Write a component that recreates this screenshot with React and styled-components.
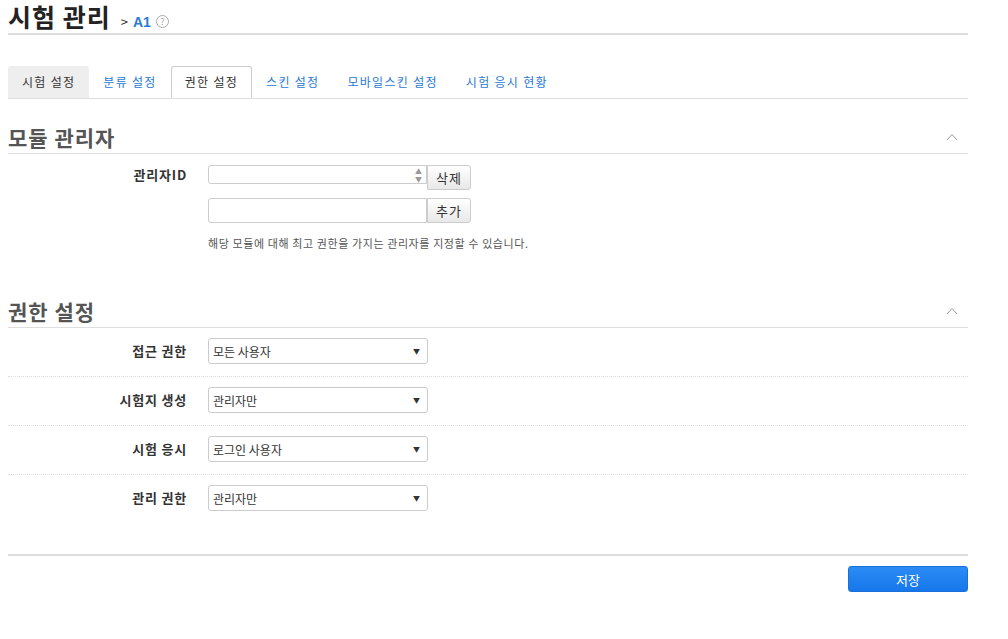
import styled, { createGlobalStyle } from "styled-components";

const Global = createGlobalStyle`
  body {
    margin: 0;
    background: #fff;
    font-family: "Noto Sans CJK KR", "Liberation Sans", sans-serif;
    color: #333;
  }
`;

const Page = styled.div`
  width: 960px;
  padding: 0 8px;
`;

const TitleBar = styled.div`
  display: flex;
  align-items: baseline;
  gap: 10px;
  height: 33px;
  border-bottom: 2px solid #ddd;
`;

const Title = styled.h1`
  margin: 0;
  font-size: 25px;
  font-weight: bold;
  color: #222;
  line-height: 32px;
  letter-spacing: 1px;
`;

const Crumb = styled.span`
  font-size: 13px;
  color: #333;
  display: flex;
  align-items: center;
  gap: 5px;
  b {
    color: #2a7ad5;
    font-family: "Liberation Sans", sans-serif;
    font-size: 14px;
  }
`;

const Help = styled.span`
  display: inline-flex;
  align-items: center;
  justify-content: center;
  width: 11px;
  height: 11px;
  border: 1px solid #aaa;
  border-radius: 50%;
  font-size: 9px;
  color: #aaa;
`;

const Tabs = styled.div`
  display: flex;
  margin-top: 31px;
  border-bottom: 1px solid #ddd;
  height: 32px;
`;

const Tab = styled.div`
  padding: 0 13px;
  font-size: 12px;
  letter-spacing: 1.3px;
  color: ${(p) => (p.$active || p.$first ? "#333" : "#2a7ad5")};
  background: ${(p) => (p.$first ? "#eee" : "#fff")};
  border: 1px solid ${(p) => (p.$active ? "#ccc" : "transparent")};
  border-bottom: ${(p) => (p.$active ? "1px solid #fff" : "none")};
  border-radius: 3px 3px 0 0;
  margin-bottom: -1px;
  height: 32px;
  box-sizing: border-box;
  line-height: 30px;
`;

const SectionHead = styled.div`
  display: flex;
  justify-content: space-between;
  align-items: center;
  margin-top: ${(p) => p.$top}px;
  height: 32px;
  border-bottom: 1px solid #ddd;
  h2 {
    margin: 0;
    font-size: 21px;
    font-weight: bold;
    color: #555;
    letter-spacing: 1px;
  }
`;

const Chevron = styled.svg`
  margin-right: 10px;
`;

const Row = styled.div`
  display: grid;
  grid-template-columns: 179px 1fr;
  column-gap: 21px;
  padding: ${(p) => p.$pad || "10px 0"};
  border-bottom: ${(p) => (p.$dotted ? "1px dotted #ddd" : "none")};
`;

const Label = styled.div`
  text-align: right;
  font-size: 13px;
  font-weight: bold;
  letter-spacing: 0.8px;
  color: #333;
  line-height: 26px;
`;

const Stack = styled.div`
  display: flex;
  flex-direction: column;
  gap: 8px;
`;

const InputGroup = styled.div`
  display: flex;
  align-items: flex-start;
`;

const Input = styled.div`
  width: 219px;
  height: ${(p) => p.$h}px;
  border: 1px solid #ccc;
  border-radius: 3px 0 0 3px;
  display: flex;
  flex-direction: column;
  justify-content: center;
  align-items: flex-end;
  font-size: 7px;
  line-height: 8px;
  color: #999;
  padding-right: 4px;
  box-sizing: border-box;
`;

const Button = styled.button`
  height: 25px;
  padding: 0 8px;
  border: 1px solid #ccc;
  border-radius: 0 3px 3px 0;
  background: linear-gradient(#fff, #e8e8e8);
  font-family: inherit;
  font-size: 13px;
  letter-spacing: 1px;
  color: #333;
`;

const Hint = styled.div`
  font-size: 11px;
  letter-spacing: 0.6px;
  color: #555;
  margin-top: 4px;
`;

const Select = styled.div`
  width: 220px;
  height: 26px;
  border: 1px solid #ccc;
  border-radius: 3px;
  box-sizing: border-box;
  display: flex;
  justify-content: space-between;
  align-items: center;
  padding: 0 7px 0 4px;
  font-size: 12px;
  color: #333;
  span {
    font-size: 7px;
    color: #333;
  }
`;

const Footer = styled.div`
  margin-top: 31px;
  border-top: 2px solid #ddd;
  padding-top: 10px;
  display: flex;
  justify-content: flex-end;
`;

const Save = styled.button`
  width: 120px;
  height: 26px;
  border: 1px solid #1a6fd8;
  border-radius: 3px;
  background: linear-gradient(#2b8cf5, #1577ea);
  color: #fff;
  font-family: inherit;
  font-size: 13px;
`;

const tabs = ["시험 설정", "분류 설정", "권한 설정", "스킨 설정", "모바일스킨 설정", "시험 응시 현황"];
const perms = [
  ["접근 권한", "모든 사용자"],
  ["시험지 생성", "관리자만"],
  ["시험 응시", "로그인 사용자"],
  ["관리 권한", "관리자만"],
];

const Up = () => (
  <Chevron width="12" height="8" viewBox="0 0 12 8">
    <path d="M1 7 L6 1.5 L11 7" fill="none" stroke="#999" strokeWidth="1" />
  </Chevron>
);

export default function App() {
  return (
    <Page>
      <Global />
      <TitleBar>
        <Title>시험 관리</Title>
        <Crumb>
          &gt; <b>A1</b> <Help>?</Help>
        </Crumb>
      </TitleBar>
      <Tabs>
        {tabs.map((t, i) => (
          <Tab key={t} $first={i === 0} $active={i === 2}>
            {t}
          </Tab>
        ))}
      </Tabs>
      <SectionHead $top={22}>
        <h2>모듈 관리자</h2>
        <Up />
      </SectionHead>
      <Row $pad="11px 0 0">
        <Label style={{ lineHeight: "20px" }}>관리자ID</Label>
        <Stack>
          <InputGroup>
            <Input $h={19}>
              <div>▲</div>
              <div>▼</div>
            </Input>
            <Button>삭제</Button>
          </InputGroup>
          <InputGroup>
            <Input $h={25} />
            <Button>추가</Button>
          </InputGroup>
          <Hint>해당 모듈에 대해 최고 권한을 가지는 관리자를 지정할 수 있습니다.</Hint>
        </Stack>
      </Row>
      <SectionHead $top={44}>
        <h2>권한 설정</h2>
        <Up />
      </SectionHead>
      {perms.map(([l, v], i) => (
        <Row key={l} $dotted={i < 3} $pad="10px 0 12px">
          <Label>{l}</Label>
          <Select>
            {v}
            <span>▼</span>
          </Select>
        </Row>
      ))}
      <Footer>
        <Save>저장</Save>
      </Footer>
    </Page>
  );
}
